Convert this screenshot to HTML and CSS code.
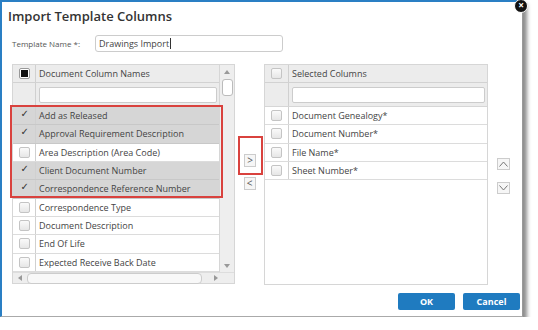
FILE: index.html
```html
<!DOCTYPE html>
<html lang="en">
<head>
    <meta charset="UTF-8">
    <title>Import Template Columns</title>
    <link rel="stylesheet" href="styles.css">
</head>
<body>
    <div class="dialog">
        <div class="close">&times;</div>
        <div class="title">Import Template Columns</div>

        <div class="name-row">
            <span class="name-label">Template Name *:</span>
            <div class="name-input">Drawings Import<span class="caret"></span></div>
        </div>

        <div class="columns">
            <div class="grid left">
                <div class="grid-body">
                    <div class="grid-main">
                        <div class="row head">
                            <div class="cb-cell"><span class="cb part"></span></div>
                            <div class="txt">Document Column Names</div>
                        </div>
                        <div class="row filter">
                            <div class="cb-cell"></div>
                            <div class="txt"><div class="filter-box"></div></div>
                        </div>
                        <div class="rows">
                            <div class="mark"></div>
                            <div class="row sel"><div class="cb-cell"><span class="cb on"></span></div><div class="txt">Add as Released</div></div>
                            <div class="row sel"><div class="cb-cell"><span class="cb on"></span></div><div class="txt">Approval Requirement Description</div></div>
                            <div class="row"><div class="cb-cell"><span class="cb"></span></div><div class="txt">Area Description (Area Code)</div></div>
                            <div class="row sel"><div class="cb-cell"><span class="cb on"></span></div><div class="txt">Client Document Number</div></div>
                            <div class="row sel"><div class="cb-cell"><span class="cb on"></span></div><div class="txt">Correspondence Reference Number</div></div>
                            <div class="row"><div class="cb-cell"><span class="cb"></span></div><div class="txt">Correspondence Type</div></div>
                            <div class="row"><div class="cb-cell"><span class="cb"></span></div><div class="txt">Document Description</div></div>
                            <div class="row"><div class="cb-cell"><span class="cb"></span></div><div class="txt">End Of Life</div></div>
                            <div class="row"><div class="cb-cell"><span class="cb"></span></div><div class="txt">Expected Receive Back Date</div></div>
                        </div>
                    </div>
                    <div class="vscroll">
                        <span class="tri up"></span>
                        <span class="thumb"></span>
                        <span class="spacer"></span>
                        <span class="tri down"></span>
                    </div>
                </div>
                <div class="hscroll">
                    <span class="tri lt"></span>
                    <span class="track"></span>
                    <span class="tri rt"></span>
                </div>
            </div>

            <div class="move">
                <div class="mark-btn"><span class="sq-btn">&gt;</span></div>
                <span class="sq-btn">&lt;</span>
            </div>

            <div class="grid right">
                <div class="row head">
                    <div class="cb-cell"><span class="cb"></span></div>
                    <div class="txt">Selected Columns</div>
                </div>
                <div class="row filter">
                    <div class="cb-cell"></div>
                    <div class="txt"><div class="filter-box"></div></div>
                </div>
                <div class="row"><div class="cb-cell"><span class="cb"></span></div><div class="txt">Document Genealogy*</div></div>
                <div class="row"><div class="cb-cell"><span class="cb"></span></div><div class="txt">Document Number*</div></div>
                <div class="row"><div class="cb-cell"><span class="cb"></span></div><div class="txt">File Name*</div></div>
                <div class="row"><div class="cb-cell"><span class="cb"></span></div><div class="txt">Sheet Number*</div></div>
            </div>

            <div class="order">
                <span class="sq-btn">
                    <svg width="9" height="6" viewBox="0 0 9 6"><path d="M0.5 5.5 L4.5 1 L8.5 5.5" fill="none" stroke="#777" stroke-width="1"/></svg>
                </span>
                <span class="sq-btn">
                    <svg width="9" height="6" viewBox="0 0 9 6"><path d="M0.5 0.5 L4.5 5 L8.5 0.5" fill="none" stroke="#777" stroke-width="1"/></svg>
                </span>
            </div>
        </div>

        <div class="footer">
            <button class="btn">OK</button>
            <button class="btn">Cancel</button>
        </div>
    </div>
</body>
</html>
```

FILE: styles.css
```css
body {
    margin: 0;
    background: #fff;
    font-family: "Open Sans", "Liberation Sans", sans-serif;
    color: #444;
}

.dialog {
    position: relative;
    width: 520px;
    height: 314px;
    border-top: 2px solid #2a7fc4;
    border-left: 2px solid #2a7fc4;
    border-right: 1px solid #999;
    border-bottom: 1px solid #aaa;
    background: #fff;
    box-shadow: 4px 4px 4px rgba(0, 0, 0, 0.45);
}

.close {
    position: absolute;
    top: -3px;
    right: -6px;
    width: 12px;
    height: 12px;
    border-radius: 50%;
    background: #111;
    border: 1px solid #fff;
    color: #fff;
    font-size: 10px;
    line-height: 11px;
    text-align: center;
    font-weight: bold;
}

.title {
    padding: 4px 0 0 6px;
    font-size: 13px;
    font-weight: 600;
    line-height: 20px;
    color: #333;
}

.name-row {
    display: flex;
    align-items: center;
    margin: 9px 0 0 10px;
    height: 17px;
}

.name-label {
    font-size: 8px;
    width: 83px;
    color: #555;
}

.name-input {
    width: 183px;
    height: 15px;
    border: 1px solid #ccc;
    border-radius: 3px;
    padding-left: 3px;
    font-size: 9px;
    line-height: 15px;
    color: #444;
    display: flex;
    align-items: center;
}

.caret {
    display: inline-block;
    width: 1px;
    height: 11px;
    background: #333;
    margin-left: 1px;
}

.columns {
    display: flex;
    margin: 12px 0 0 10px;
    height: 221px;
}

.grid {
    border: 1px solid #d6d6d6;
    box-sizing: border-box;
    font-size: 9px;
}

.grid.left {
    width: 223px;
    height: 220px;
    background: #eee;
    display: flex;
    flex-direction: column;
}

.grid.right {
    width: 224px;
    height: 221px;
    background: #fff;
}

.grid-body {
    display: flex;
    flex: 1;
}

.grid-main {
    flex: 1;
    background: #fff;
}

.row {
    display: flex;
    height: 18.33px;
    box-sizing: border-box;
    border-bottom: 1px solid #dcdcdc;
}

.row.head {
    height: 18px;
    background: #ececec;
    border-bottom: 1px solid #d2d2d2;
}

.row.filter {
    height: 24px;
    background: #ececec;
    border-bottom: 1px solid #d6d6d6;
}

.row.sel {
    background: #d6d6d6;
    border-bottom: 1px solid #c8c8c8;
}

.cb-cell {
    width: 22px;
    flex-shrink: 0;
    display: flex;
    align-items: center;
    justify-content: center;
    border-right: 1px solid #d0d0d0;
}

.right .cb-cell {
    width: 23px;
}

.txt {
    flex: 1;
    display: flex;
    align-items: center;
    padding-left: 3px;
    white-space: nowrap;
    overflow: hidden;
    color: #444;
}

.filter .txt {
    padding: 0 2px 0 3px;
}

.filter-box {
    width: 100%;
    height: 14px;
    background: #fff;
    border: 1px solid #ccc;
    border-radius: 2px;
}

.cb {
    width: 9px;
    height: 9px;
    border: 1px solid #c4c4c4;
    border-radius: 2px;
    background: linear-gradient(#fafafa, #e6e6e6);
    position: relative;
}

.cb.on {
    border-color: transparent;
    background: transparent;
}

.cb.on::after {
    content: "\2713";
    position: absolute;
    left: 1px;
    top: -3px;
    font-size: 10px;
    color: #333;
    font-family: "DejaVu Sans", sans-serif;
}

.cb.part {
    border-color: #999;
    background: #fff;
}

.cb.part::after {
    content: "";
    position: absolute;
    left: 1px;
    top: 1px;
    width: 7px;
    height: 7px;
    background: #111;
}

.rows {
    position: relative;
}

.mark {
    position: absolute;
    left: -3px;
    top: -2px;
    width: 213px;
    height: 93px;
    border: 2px solid #d9423e;
    box-sizing: border-box;
    pointer-events: none;
}

.vscroll {
    width: 15px;
    border-left: 1px solid #d6d6d6;
    display: flex;
    flex-direction: column;
    align-items: center;
    padding: 5px 0 4px;
    box-sizing: border-box;
}

.thumb {
    width: 9px;
    height: 15px;
    margin-top: 5px;
    background: #fff;
    border: 1px solid #bbb;
    border-radius: 3px;
}

.spacer {
    flex: 1;
}

.tri {
    width: 0;
    height: 0;
    border: 3px solid transparent;
}

.tri.up {
    border-bottom: 4px solid #999;
    border-top: 0;
}

.tri.down {
    border-top: 4px solid #999;
    border-bottom: 0;
}

.hscroll {
    height: 13px;
    display: flex;
    align-items: center;
    padding: 0 6px 0 5px;
    border-top: 1px solid #ddd;
}

.tri.lt {
    border-right: 4px solid #999;
    border-left: 0;
}

.tri.rt {
    border-left: 4px solid #999;
    border-right: 0;
}

.track {
    width: 173px;
    height: 9px;
    margin: 0 12px 0 5px;
    background: #f8f8f8;
    border: 1px solid #ccc;
    border-radius: 4px;
}

.move {
    width: 29px;
    display: flex;
    flex-direction: column;
    align-items: center;
    padding-top: 72px;
    gap: 2px;
}

.mark-btn {
    width: 25px;
    height: 39px;
    box-sizing: border-box;
    border: 2px solid #d9423e;
    display: flex;
    align-items: flex-end;
    justify-content: center;
    padding-bottom: 6px;
    margin-left: 1px;
}

.sq-btn {
    width: 10px;
    height: 11px;
    border: 1px solid #ccc;
    background: #f6f6f6;
    display: flex;
    align-items: center;
    justify-content: center;
    font-size: 10px;
    line-height: 11px;
    color: #555;
}

.order {
    display: flex;
    flex-direction: column;
    padding: 94px 0 0 9px;
    gap: 12px;
}

.order .sq-btn {
    width: 11px;
    height: 10px;
}

.footer {
    display: flex;
    justify-content: flex-end;
    gap: 8px;
    margin: 8px 2px 0 0;
}

.btn {
    width: 57px;
    height: 17px;
    border: none;
    border-radius: 2px;
    background: #1f7bc0;
    color: #fff;
    font-family: "Open Sans", "Liberation Sans", sans-serif;
    font-size: 9px;
    font-weight: bold;
    padding: 0;
}
```
